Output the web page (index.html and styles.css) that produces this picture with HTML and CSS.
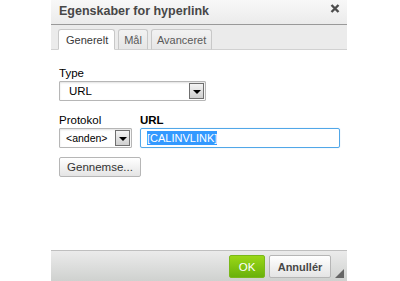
FILE: index.html
```html
<!DOCTYPE html>
<html>
<head>
<meta charset="utf-8">
<link rel="stylesheet" href="styles.css">
</head>
<body>
<div class="dialog">
  <div class="titlebar">
    <span class="title">Egenskaber for hyperlink</span>
    <svg class="close" width="10" height="9" viewBox="0 0 10 9"><path d="M1.5 1 L8.5 8 M8.5 1 L1.5 8" stroke="#4d4d4d" stroke-width="2.4" stroke-linecap="butt"/></svg>
  </div>
  <div class="tabs">
    <div class="tab active">Generelt</div>
    <div class="tab">Mål</div>
    <div class="tab">Avanceret</div>
  </div>
  <div class="content">
    <div class="field type-field">
      <div class="label">Type</div>
      <div class="select wide">
        <span class="val">URL</span>
        <span class="arrow"></span>
      </div>
    </div>
    <div class="row">
      <div class="field">
        <div class="label">Protokol</div>
        <div class="select narrow">
          <span class="val small">&lt;anden&gt;</span>
          <span class="arrow"></span>
        </div>
      </div>
      <div class="field grow">
        <div class="label bold">URL</div>
        <div class="input"><span class="sel">[CALINVLINK]</span></div>
      </div>
    </div>
    <div class="btn browse">Gennemse...</div>
  </div>
  <div class="footer">
    <div class="btn ok">OK</div>
    <div class="btn cancel">Annullér</div>
    <span class="resize"></span>
  </div>
</div>
</body>
</html>
```
FILE: styles.css
```css
* { box-sizing: border-box; }
html, body { margin: 0; padding: 0; background: #fff; }
body {
  font-family: "Liberation Sans", Arial, sans-serif;
  font-size: 11px;
  color: #000;
}
.dialog {
  margin-left: 51px;
  width: 296px;
  height: 281px;
  display: flex;
  flex-direction: column;
  background: #fff;
}
.titlebar {
  height: 25px;
  flex: none;
  background: linear-gradient(#f8f8f8, #ebebeb);
  border-bottom: 1px solid #999;
  display: flex;
  align-items: center;
  justify-content: space-between;
  padding: 0 7px 2px 8px;
}
.title {
  font-weight: bold;
  color: #474747;
  font-size: 12.5px;
}
.close {
  display: block;
  margin-top: -5px;
}
.tabs {
  height: 25px;
  flex: none;
  background: #ebebeb;
  border-bottom: 1px solid #d1d1d1;
  display: flex;
  align-items: flex-end;
  gap: 3px;
  padding-left: 7px;
}
.tab {
  height: 21px;
  margin-bottom: -1px;
  padding: 0 5px;
  display: flex;
  align-items: center;
  font-size: 11px;
  color: #595959;
  background: linear-gradient(#f2f2f2, #e6e6e6);
  border: 1px solid #c8c8c8;
  border-bottom-color: #d1d1d1;
  border-radius: 3px 3px 0 0;
}
.tab.active {
  background: #fff;
  border-bottom-color: #fff;
  padding: 0 6px 0 7px;
  color: #383838;
}
.content {
  flex: 1;
  padding: 16px 8px 0 8px;
}
.field { display: flex; flex-direction: column; }
.label {
  height: 14px;
  line-height: 14px;
  margin-bottom: 1px;
  color: #000;
  font-size: 11.5px;
}
.label.bold { font-weight: bold; }
.select {
  height: 20px;
  border: 1px solid #b6b6b6;
  border-radius: 1px;
  box-shadow: inset 0 1px 2px rgba(0,0,0,0.12);
  display: flex;
  align-items: center;
  justify-content: space-between;
  padding: 0 1px 0 9px;
  background: #fff;
}
.select.wide { width: 147px; }
.select.narrow { width: 73px; padding-left: 6px; }
.val { font-size: 11.5px; }
.val.small { font-size: 10.5px; }
.arrow {
  width: 15px;
  height: 16px;
  border: 1px solid #6f6f6f;
  background: linear-gradient(#f4f4f4, #cfcfcf);
  position: relative;
}
.arrow::after {
  content: "";
  position: absolute;
  left: 3px;
  top: 6px;
  border-left: 4px solid transparent;
  border-right: 4px solid transparent;
  border-top: 4px solid #000;
}
.type-field { margin-bottom: 12px; }
.row {
  display: flex;
  gap: 8px;
  align-items: flex-start;
}
.grow { flex: none; width: 200px; }
.input {
  height: 20px;
  border: 1px solid #51a7e8;
  border-radius: 2px;
  box-shadow: 0 0 1px #9cc9ef;
  display: flex;
  align-items: center;
  padding-left: 6px;
}
.sel {
  background: #3399ff;
  color: #fff;
  line-height: 14px;
  font-size: 11px;
}
.btn {
  display: inline-flex;
  align-items: center;
  justify-content: center;
  border: 1px solid #b6b6b6;
  border-radius: 2px;
  background: linear-gradient(#ffffff, #e4e4e4);
  color: #333;
}
.browse {
  margin-top: 9px;
  width: 82px;
  height: 20px;
  font-size: 11.5px;
}
.footer {
  height: 31px;
  flex: none;
  border-top: 1px solid #bfbfbf;
  background: linear-gradient(#ebebeb, #cfd1cf);
  display: flex;
  align-items: flex-start;
  justify-content: flex-end;
  padding: 4px 0 0 0;
  position: relative;
}
.ok {
  width: 36px;
  height: 23px;
  background: linear-gradient(#9ad717, #69b10b);
  border-color: #7ab81a;
  color: #fff;
  font-size: 11.5px;
  margin-right: 4px;
}
.cancel {
  width: 62px;
  height: 23px;
  font-weight: bold;
  font-size: 11px;
  color: #474747;
  margin-right: 16px;
}
.resize {
  position: absolute;
  right: 3px;
  bottom: 3px;
  width: 0;
  height: 0;
  border-left: 9px solid transparent;
  border-bottom: 9px solid #666;
}
```
